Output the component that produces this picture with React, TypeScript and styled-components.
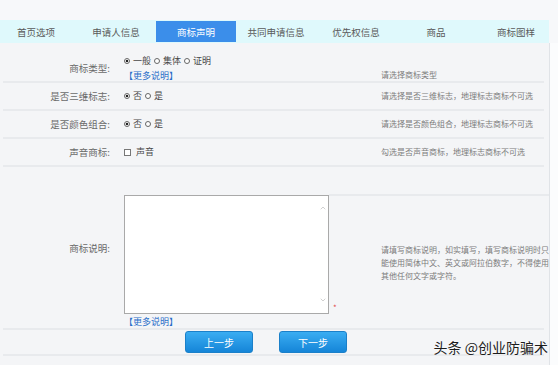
import React from 'react'
import styled, { createGlobalStyle } from 'styled-components'
import { ChevronDown, ChevronUp } from 'lucide-react'

const GlobalStyle = createGlobalStyle`
  html, body {
    margin: 0;
    padding: 0;
  }
  body {
    background: #f7f8fa;
    font-family: 'Noto Sans CJK SC', 'Noto Sans', sans-serif;
  }
`

const Page = styled.div`
  position: relative;
  width: 558px;
  height: 365px;
  overflow: hidden;
  display: flex;
  flex-direction: column;
  background: #f7f8fa;
`

const TopGap = styled.div`
  height: 20px;
  flex: none;
`

const TabBar = styled.nav`
  width: 549px;
  height: 23px;
  flex: none;
  overflow: hidden;
  background: #dff9fc;
`

const TabTrack = styled.div`
  display: grid;
  grid-template-columns: repeat(7, 80px);
  height: 100%;
  margin-left: -4px;
`

const Tab = styled.div<{ $active?: boolean }>`
  display: flex;
  align-items: center;
  justify-content: center;
  margin: ${({ $active }) => ($active ? '1px 0' : '0')};
  font-size: 9.5px;
  color: ${({ $active }) => ($active ? '#ffffff' : '#5a5a5a')};
  background: ${({ $active }) => ($active ? '#3b8eea' : 'transparent')};
`

const Body = styled.div`
  flex: 1;
  display: flex;
`

const Panel = styled.section`
  width: 550px;
  flex: none;
  background: #f4f5f7;
  border-right: 1px solid #e0e3e7;
  padding: 0 5px 0 3px;
  box-sizing: border-box;
`

const RightStrip = styled.div`
  flex: 1;
  background: #fbfcfd;
`

const Row = styled.div<{ $h: number }>`
  display: grid;
  grid-template-columns: 113px 265px 1fr;
  align-items: center;
  height: ${({ $h }) => $h}px;
  border-bottom: 2px solid #e8eaed;
`

const BigRow = styled.div`
  display: grid;
  grid-template-columns: 113px 213px 1fr;
  height: 161px;
  border-bottom: 2px solid #e8eaed;
`

const Label = styled.div<{ $pt?: number }>`
  align-self: ${({ $pt }) => ($pt !== undefined ? 'start' : 'center')};
  padding-top: ${({ $pt }) => $pt ?? 0}px;
  padding-right: 6px;
  text-align: right;
  font-size: 9.5px;
  line-height: 12px;
  color: #6a6a6a;
  white-space: nowrap;
`

const Field = styled.div<{ $pt?: number }>`
  align-self: ${({ $pt }) => ($pt !== undefined ? 'start' : 'center')};
  padding-top: ${({ $pt }) => $pt ?? 0}px;
  padding-left: 8px;
  font-size: 9px;
  line-height: 12px;
  color: #484848;
`

const Hint = styled.div<{ $pt?: number }>`
  align-self: ${({ $pt }) => ($pt !== undefined ? 'start' : 'center')};
  padding-top: ${({ $pt }) => $pt ?? 0}px;
  font-size: 8px;
  line-height: 12px;
  color: #7c7c7c;
  white-space: nowrap;
`

const Options = styled.div`
  display: flex;
  align-items: center;
  white-space: nowrap;
`

const Radio = styled.span<{ $checked?: boolean }>`
  display: inline-block;
  width: 6px;
  height: 6px;
  border: 1px solid #666;
  border-radius: 50%;
  box-sizing: border-box;
  margin-right: 3px;
  background: ${({ $checked }) =>
    $checked ? 'radial-gradient(circle, #222 0 1.4px, #fff 1.6px)' : '#fff'};
`

const Check = styled.span`
  display: inline-block;
  width: 7px;
  height: 7px;
  border: 1px solid #777;
  box-sizing: border-box;
  background: #fff;
  margin-right: 5px;
`

const OptionText = styled.span`
  margin-right: 3px;
`

const MoreLink = styled.div<{ $mt?: number }>`
  margin-top: ${({ $mt }) => $mt ?? 0}px;
  font-size: 9px;
  line-height: 12px;
  color: #2a6fc9;
  white-space: nowrap;
`

const TextLine = styled.div`
  display: flex;
  align-items: flex-end;
  width: max-content;
`

const TextBox = styled.div`
  width: 205px;
  height: 119px;
  box-sizing: border-box;
  border: 1px solid #a9a9a9;
  background: #fff;
  display: flex;
  justify-content: flex-end;
`

const ScrollTrack = styled.div`
  width: 11px;
  display: flex;
  flex-direction: column;
  justify-content: space-between;
  align-items: center;
  padding: 8px 0 9px;
  color: #b8b8b8;
`

const Asterisk = styled.span`
  margin: 0 0 2px 4px;
  font-size: 8px;
  line-height: 8px;
  color: #e24a4a;
`

const NoteArea = styled.div`
  margin-top: 27px;
  border-top: 2px solid #e8eaed;
  display: flex;
  align-items: center;
  padding-left: 52px;
  font-size: 8px;
  line-height: 13px;
  color: #7c7c7c;
  white-space: nowrap;
`

const ButtonRow = styled.div`
  display: flex;
  gap: 26px;
  height: 26px;
  padding: 1px 0 0 182px;
  box-sizing: border-box;
  border-bottom: 2px solid #e8eaed;
`

const StepButton = styled.button`
  width: 68px;
  height: 22px;
  padding: 0;
  border: 1px solid #1b80c9;
  border-radius: 3px;
  background: linear-gradient(#3aadf2, #1585d8);
  color: #fff;
  font-family: inherit;
  font-size: 10px;
`

const Watermark = styled.div`
  position: absolute;
  right: 10px;
  bottom: 10px;
  font-size: 14px;
  line-height: 16px;
  color: #1c1c1c;
  text-shadow: 0 0 2px #fff;
`

const tabs = ['首页选项', '申请人信息', '商标声明', '共同申请信息', '优先权信息', '商品', '商标图样']

type YesNoProps = { yes?: boolean }

const YesNo: React.FC<YesNoProps> = ({ yes }) => (
  <Options>
    <Radio $checked={!yes} />
    <OptionText>否</OptionText>
    <Radio $checked={yes} />
    <OptionText>是</OptionText>
  </Options>
)

const App: React.FC = () => (
  <Page>
    <GlobalStyle />
    <TopGap />
    <TabBar>
      <TabTrack>
        {tabs.map((t) => (
          <Tab key={t} $active={t === '商标声明'}>
            {t}
          </Tab>
        ))}
      </TabTrack>
    </TabBar>
    <Body>
      <Panel>
        <Row $h={38}>
          <Label $pt={19}>商标类型:</Label>
          <Field $pt={12}>
            <Options>
              <Radio $checked />
              <OptionText>一般</OptionText>
              <Radio />
              <OptionText>集体</OptionText>
              <Radio />
              <OptionText>证明</OptionText>
            </Options>
            <MoreLink $mt={3}>【更多说明】</MoreLink>
          </Field>
          <Hint $pt={26}>请选择商标类型</Hint>
        </Row>
        <Row $h={26}>
          <Label>是否三维标志:</Label>
          <Field>
            <YesNo />
          </Field>
          <Hint>请选择是否三维标志，地理标志商标不可选</Hint>
        </Row>
        <Row $h={26}>
          <Label>是否颜色组合:</Label>
          <Field>
            <YesNo />
          </Field>
          <Hint>请选择是否颜色组合，地理标志商标不可选</Hint>
        </Row>
        <Row $h={26}>
          <Label>声音商标:</Label>
          <Field>
            <Options>
              <Check />
              <OptionText>声音</OptionText>
            </Options>
          </Field>
          <Hint>勾选是否声音商标，地理标志商标不可选</Hint>
        </Row>
        <BigRow>
          <Label>商标说明:</Label>
          <Field $pt={28}>
            <TextLine>
              <TextBox>
                <ScrollTrack>
                  <ChevronUp size={8} strokeWidth={2} />
                  <ChevronDown size={8} strokeWidth={2} />
                </ScrollTrack>
              </TextBox>
              <Asterisk>*</Asterisk>
            </TextLine>
            <MoreLink $mt={2}>【更多说明】</MoreLink>
          </Field>
          <NoteArea>
            <div>
              请填写商标说明，如实填写，填写商标说明时只
              <br />
              能使用简体中文、英文或阿拉伯数字，不得使用
              <br />
              其他任何文字或字符。
            </div>
          </NoteArea>
        </BigRow>
        <ButtonRow>
          <StepButton>上一步</StepButton>
          <StepButton>下一步</StepButton>
        </ButtonRow>
      </Panel>
      <RightStrip />
    </Body>
    <Watermark>头条 @创业防骗术</Watermark>
  </Page>
)

export default App
